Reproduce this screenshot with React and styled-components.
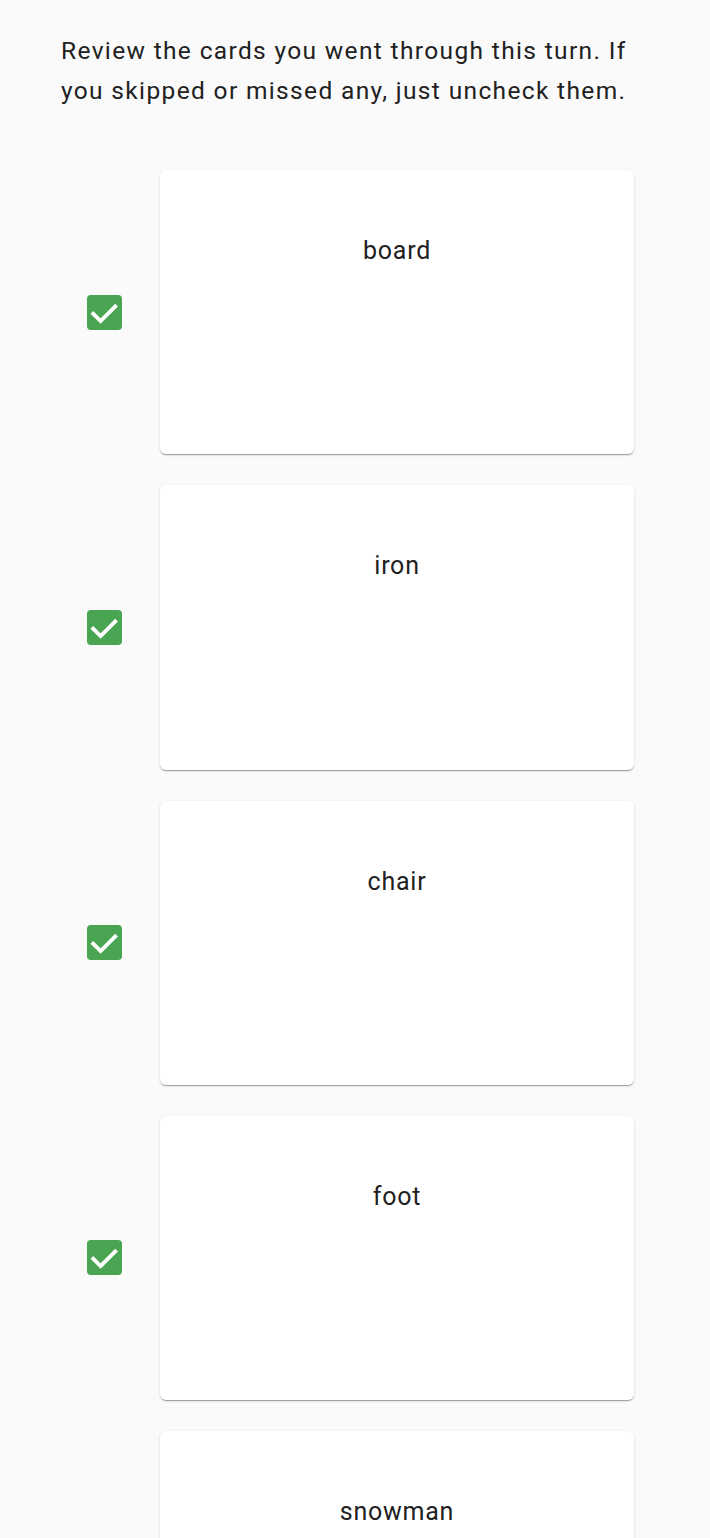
import React, { useState } from "react";
import styled, { createGlobalStyle } from "styled-components";

// ================= Global =================

const GlobalStyle = createGlobalStyle`
  html, body {
    margin: 0;
    padding: 0;
    background: #fafafa;
  }
  body {
    font-family: Roboto, "Noto Sans", sans-serif;
    color: #212121;
  }
`;

// ================= Styled Components =================

const Page = styled.main`
  min-height: 1538px;
  padding: 31px 0 0;
  box-sizing: border-box;
`;

const Intro = styled.p`
  margin: 0;
  padding: 0 61px;
  font-size: 24.5px;
  line-height: 40px;
  color: #212121;
  letter-spacing: 0.055em;
`;

const List = styled.ul`
  list-style: none;
  margin: 59px 0 0;
  padding: 0 76px 0 87px;
  display: flex;
  flex-direction: column;
  gap: 31px;
`;

const Row = styled.li`
  display: flex;
  align-items: center;
  gap: 38px;
`;

const CheckBox = styled.button`
  flex: 0 0 auto;
  width: 35px;
  height: 35px;
  padding: 0;
  border: ${({ $checked }) => ($checked ? "none" : "3px solid #757575")};
  border-radius: 4px;
  background: ${({ $checked }) => ($checked ? "#49a552" : "transparent")};
  display: flex;
  align-items: center;
  justify-content: center;
  cursor: pointer;
  box-sizing: border-box;
`;

const Card = styled.div`
  flex: 1;
  height: 284.25px;
  background: #ffffff;
  border-radius: 6px;
  box-shadow: 0 2px 1px -1px rgba(0, 0, 0, 0.2), 0 1px 1px 0 rgba(0, 0, 0, 0.14),
    0 1px 3px 0 rgba(0, 0, 0, 0.12);
  display: flex;
  justify-content: center;
  padding-top: 63px;
  box-sizing: border-box;
`;

const Word = styled.span`
  font-size: 25px;
  line-height: 36px;
  color: #212121;
  letter-spacing: 0.03em;
`;

// ================= Icons =================

const CheckIcon = () => (
  <svg width="35" height="35" viewBox="0 0 18 18" fill="none" stroke="#ffffff" strokeWidth="2" strokeLinecap="butt" strokeLinejoin="miter">
    <polyline points="2.5 8.9 7 13.4 15.2 5.2" />
  </svg>
);

// ================= Data =================

const words = ["board", "iron", "chair", "foot", "snowman"];

// ================= Main Component =================

const App = () => {
  const [checked, setChecked] = useState(words.map(() => true));

  const toggle = (i) =>
    setChecked((prev) => prev.map((v, j) => (j === i ? !v : v)));

  return (
    <>
      <GlobalStyle />
      <Page>
        <Intro>
          Review the cards you went through this turn. If you skipped or missed any, just uncheck them.
        </Intro>
        <List>
          {words.map((word, i) => (
            <Row key={word}>
              <CheckBox
                $checked={checked[i]}
                onClick={() => toggle(i)}
                aria-label={`Toggle ${word}`}
              >
                {checked[i] && <CheckIcon />}
              </CheckBox>
              <Card>
                <Word>{word}</Word>
              </Card>
            </Row>
          ))}
        </List>
      </Page>
    </>
  );
};

export default App;
